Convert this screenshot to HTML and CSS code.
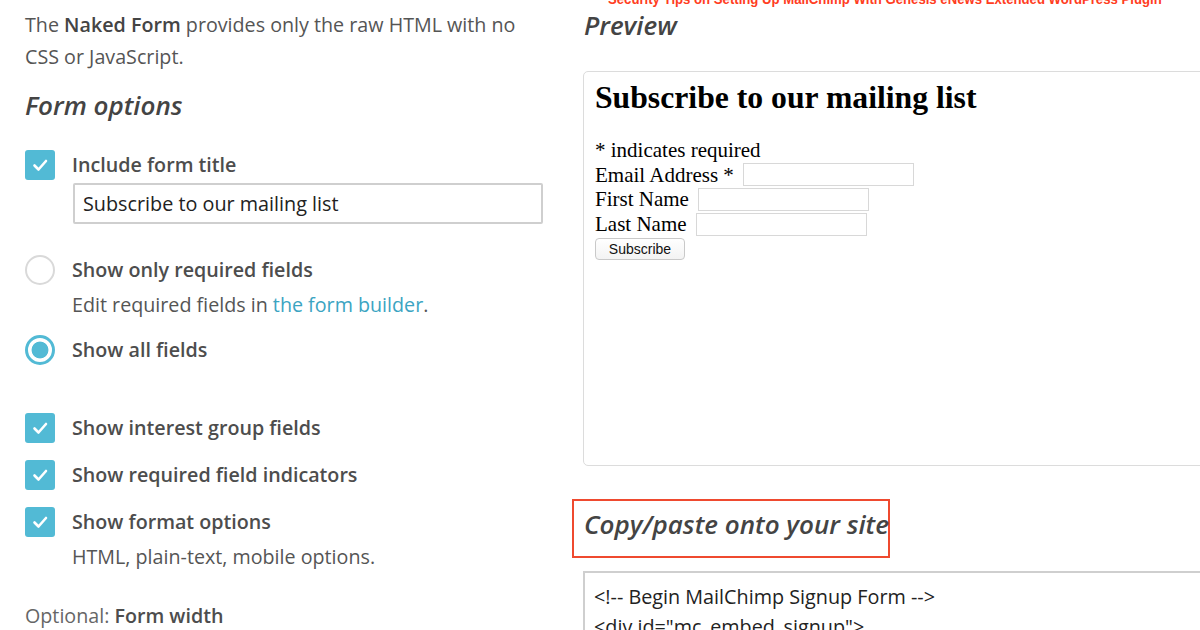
FILE: index.html
```html
<!DOCTYPE html>
<html>
<head>
  <title>Naked Form</title>
  <link rel="stylesheet" href="styles.css">
</head>
<body>
  <div class="page">
    <div class="options">
      <p class="intro">The <b>Naked Form</b> provides only the raw HTML with no CSS or JavaScript.</p>
      <h3 class="section-title">Form options</h3>

      <div class="opt first">
        <span class="check"><svg viewBox="0 0 30 30"><path d="M9.5 15.5l4 4 7.5-8.5" /></svg></span>
        <div class="opt-body">
          <div class="label">Include form title</div>
          <input class="title-input" type="text" value="Subscribe to our mailing list">
        </div>
      </div>

      <div class="opt radio-first">
        <span class="radio"></span>
        <div class="opt-body">
          <div class="label">Show only required fields</div>
          <div class="note">Edit required fields in <a href="#">the form builder</a>.</div>
        </div>
      </div>

      <div class="opt radio-second">
        <span class="radio on"></span>
        <div class="opt-body">
          <div class="label">Show all fields</div>
        </div>
      </div>

      <div class="opt group-start">
        <span class="check"><svg viewBox="0 0 30 30"><path d="M9.5 15.5l4 4 7.5-8.5" /></svg></span>
        <div class="opt-body"><div class="label">Show interest group fields</div></div>
      </div>
      <div class="opt">
        <span class="check"><svg viewBox="0 0 30 30"><path d="M9.5 15.5l4 4 7.5-8.5" /></svg></span>
        <div class="opt-body"><div class="label">Show required field indicators</div></div>
      </div>
      <div class="opt">
        <span class="check"><svg viewBox="0 0 30 30"><path d="M9.5 15.5l4 4 7.5-8.5" /></svg></span>
        <div class="opt-body">
          <div class="label">Show format options</div>
          <div class="note">HTML, plain-text, mobile options.</div>
        </div>
      </div>

      <div class="optional">Optional: <b>Form width</b></div>
    </div>

    <div class="output">
      <div class="watermark">Security Tips on Setting Up MailChimp With Genesis eNews Extended WordPress Plugin</div>
      <h3 class="section-title">Preview</h3>
      <div class="preview">
        <h2>Subscribe to our mailing list</h2>
        <div class="pv-line">* indicates required</div>
        <div class="pv-line">Email Address * <span class="pv-input"></span></div>
        <div class="pv-line">First Name <span class="pv-input"></span></div>
        <div class="pv-line">Last Name <span class="pv-input"></span></div>
        <div class="pv-line"><button class="pv-button">Subscribe</button></div>
      </div>

      <div class="copy-head">
        <h3 class="section-title">Copy/paste onto your site</h3>
      </div>
      <div class="code">
        <div>&lt;!-- Begin MailChimp Signup Form --&gt;</div>
        <div>&lt;div id="mc_embed_signup"&gt;</div>
      </div>
    </div>
  </div>
</body>
</html>
```

FILE: styles.css
```css
body {
  margin: 0;
  font-family: "Open Sans", "Noto Sans", sans-serif;
  font-size: 19.7px;
  color: #555;
  background: #fff;
  overflow: hidden;
  height: 630px;
}
.page {
  display: flex;
  gap: 40px;
  padding-left: 25px;
}
.options {
  width: 518px;
  flex-shrink: 0;
}
.output {
  width: 660px;
  flex-shrink: 0;
  position: relative;
}
.intro {
  margin: 9px 0 0;
  line-height: 32px;
}
.intro b {
  font-weight: 600;
  color: #444;
}
.section-title {
  margin: 0;
  font-size: 26px;
  line-height: 36px;
  font-style: italic;
  font-weight: 600;
  color: #444;
}
.options .section-title {
  margin-top: 14px;
}
.opt {
  display: flex;
  gap: 17px;
  align-items: flex-start;
  margin-top: 17px;
}
.opt.first {
  margin-top: 27px;
}
.opt.radio-first {
  margin-top: 31px;
}
.opt.radio-second {
  margin-top: 15px;
}
.opt.group-start {
  margin-top: 48px;
  margin-bottom: 1px;
}
.opt-body {
  flex: 1;
}
.label {
  line-height: 30px;
  font-weight: 600;
  color: #4d4d4d;
}
.note {
  line-height: 30px;
  margin-top: 5px;
}
.note a {
  color: #3ba4c2;
  text-decoration: none;
}
.check {
  width: 30px;
  height: 30px;
  border-radius: 3px;
  background: #52bad5;
  flex-shrink: 0;
  display: block;
}
.check svg {
  width: 30px;
  height: 30px;
  display: block;
}
.check path {
  fill: none;
  stroke: #fff;
  stroke-width: 2.6;
  stroke-linecap: round;
  stroke-linejoin: round;
}
.radio {
  width: 30px;
  height: 30px;
  border-radius: 50%;
  border: 2px solid #d9d9d9;
  box-sizing: border-box;
  flex-shrink: 0;
  display: block;
}
.radio.on {
  border: 3px solid #52bad5;
  background: radial-gradient(circle, #52bad5 0 8px, #fff 8.8px);
}
.title-input {
  display: block;
  margin-top: 3px;
  margin-left: 1px;
  width: 470px;
  height: 41px;
  box-sizing: border-box;
  border: 2px solid #cfcfcf;
  border-radius: 2px;
  padding: 0 8px;
  font-family: "Open Sans", "Noto Sans", sans-serif;
  font-size: 19.8px;
  color: #222;
}
.optional {
  margin-top: 29px;
  line-height: 30px;
  color: #666;
}
.optional b {
  font-weight: 600;
  color: #4d4d4d;
}
.watermark {
  position: absolute;
  top: -9px;
  left: 25px;
  white-space: nowrap;
  font-family: "Liberation Sans", Arial, sans-serif;
  font-weight: bold;
  font-size: 14px;
  color: #ff3d22;
  transform: scaleX(0.94);
  transform-origin: left top;
}
.output .section-title {
  margin-top: 7px;
  margin-left: 1px;
}
.preview {
  margin-top: 28px;
  height: 395px;
  box-sizing: border-box;
  border: 1px solid #dcdcdc;
  border-radius: 5px;
  padding: 0 11px;
  font-family: "Liberation Serif", "Times New Roman", serif;
  font-size: 21px;
  color: #000;
}
.preview h2 {
  margin: 8px 0 22px;
  font-size: 31.7px;
  line-height: 36px;
}
.pv-line {
  height: 24.6px;
  line-height: 24.6px;
  display: flex;
  align-items: center;
  gap: 4px;
  white-space: pre;
}
.pv-input {
  width: 171px;
  height: 23px;
  box-sizing: border-box;
  border: 1px solid #d8d8d8;
  display: inline-block;
}
.pv-button {
  height: 22px;
  width: 90px;
  padding: 0;
  font-family: "Liberation Sans", Arial, sans-serif;
  font-size: 14px;
  color: #111;
  background: linear-gradient(#fff, #f3f3f3);
  border: 1px solid #c9c9c9;
  border-radius: 4px;
}
.copy-head {
  margin-top: 33px;
  margin-left: -11px;
  width: 318px;
  height: 59px;
  box-sizing: border-box;
  border: 2px solid #ef4a2f;
  padding: 5px 0 0 10px;
  white-space: nowrap;
}
.output .copy-head .section-title {
  margin: 0;
}
.code {
  margin-top: 13px;
  height: 80px;
  box-sizing: border-box;
  border: 2px solid #cfcfcf;
  border-right: none;
  padding: 9px 9px;
  line-height: 30px;
  font-size: 19.8px;
  color: #222;
}
```
